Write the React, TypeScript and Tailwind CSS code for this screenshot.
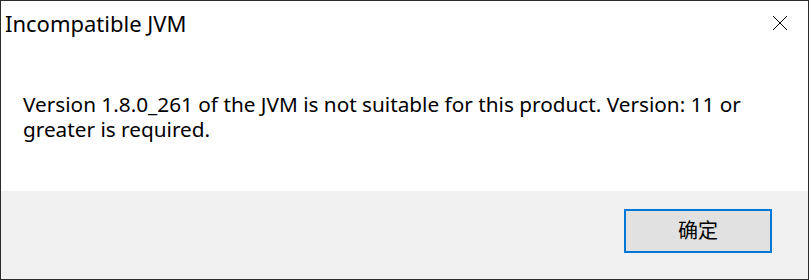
export default function App() {
    return (
        <div
            className="w-[809px] h-[280px] border border-[#2b2b2b] bg-white flex flex-col text-black"
            style={{ fontFamily: '"Noto Sans", "Noto Sans CJK SC", sans-serif' }}
        >
            {/* title bar */}
            <div className="h-[44px] flex items-center justify-between shrink-0">
                <span className="pl-[4px] text-[22px] leading-none">Incompatible JVM</span>
                <button type="button" className="w-[46px] h-[44px] mr-[5px] flex items-center justify-center">
                    <svg width="16" height="16" viewBox="0 0 16 16" className="text-black">
                        <path d="M1 1 L15 15 M15 1 L1 15" stroke="currentColor" strokeWidth="1" fill="none" />
                    </svg>
                </button>
            </div>

            {/* message */}
            <div className="flex-1 pl-[22px] pr-[40px] pt-[47px]">
                <p className="text-[20.75px] leading-[25px]">
                    Version 1.8.0_261 of the JVM is not suitable for this product. Version: 11 or greater is required.
                </p>
            </div>

            {/* footer */}
            <div className="h-[88px] shrink-0 bg-[#f0f0f0] flex justify-end items-start pt-[18px] pr-[36px]">
                <button
                    type="button"
                    className="w-[148px] h-[44px] border-2 border-[#0078d7] bg-[#e1e1e1] text-[20px] leading-none flex items-center justify-center"
                >
                    确定
                </button>
            </div>
        </div>
    );
}
